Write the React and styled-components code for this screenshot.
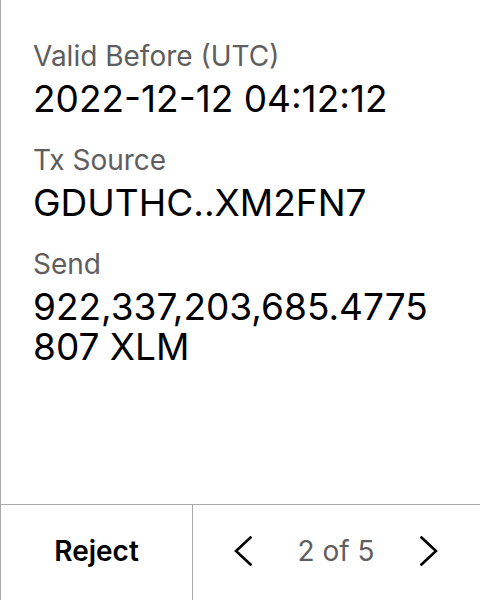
import React from 'react';
import styled, { createGlobalStyle } from 'styled-components';

let Global = createGlobalStyle`
  html, body {
    margin: 0;
    padding: 0;
    background: #fff;
  }
  body {
    font-family: Inter, "Noto Sans", sans-serif;
  }
`;

let Screen = styled.div`
  width: 480px;
  height: 600px;
  box-sizing: border-box;
  border-left: 1px solid #a8a8a8;
  display: flex;
  flex-direction: column;
`;

let Body = styled.div`
  flex: 1;
  padding: 39px 36px 0 32px;
  display: flex;
  flex-direction: column;
  gap: 24px;
`;

let Field = styled.div`
  display: flex;
  flex-direction: column;
  gap: 6px;
`;

let Label = styled.div`
  font-size: 28px;
  line-height: 34px;
  color: #5e5e5e;
`;

let Value = styled.div`
  font-size: 37px;
  line-height: 40px;
  color: #000;
  word-break: break-all;
`;

let Footer = styled.div`
  height: 96px;
  box-sizing: border-box;
  border-top: 1px solid #a8a8a8;
  display: flex;
`;

let RejectBtn = styled.button`
  width: 192px;
  border: none;
  border-right: 1px solid #a8a8a8;
  background: none;
  font-family: inherit;
  font-size: 28px;
  font-weight: 600;
  color: #000;
  padding: 0 0 4px;
`;

let Pager = styled.div`
  flex: 1;
  display: flex;
  align-items: center;
  justify-content: space-between;
  padding: 0 42px 4px 41px;
`;

let Arrow = styled.button`
  border: none;
  background: none;
  padding: 0;
  width: 18px;
  height: 32px;
  display: flex;
  align-items: center;
  justify-content: center;
`;

let Count = styled.span`
  font-size: 28px;
  color: #5e5e5e;
`;

function Chevron({ dir }) {
  let d = dir === 'left' ? 'M16.5 1.5 L2 15 L16.5 28.5' : 'M1.5 1.5 L16 15 L1.5 28.5';
  return (
    <svg width="18" height="30" viewBox="0 0 18 30" fill="none">
      <path d={d} stroke="#000" strokeWidth="2.6" strokeLinecap="square" strokeLinejoin="miter" />
    </svg>
  );
}

let fields = [
  { label: 'Valid Before (UTC)', value: '2022-12-12 04:12:12' },
  { label: 'Tx Source', value: 'GDUTHC..XM2FN7' },
  { label: 'Send', value: '922,337,203,685.4775807 XLM' },
];

export default function App() {
  return (
    <>
      <Global />
      <Screen>
        <Body>
          {fields.map((f) => (
            <Field key={f.label}>
              <Label>{f.label}</Label>
              <Value>{f.value}</Value>
            </Field>
          ))}
        </Body>
        <Footer>
          <RejectBtn>Reject</RejectBtn>
          <Pager>
            <Arrow><Chevron dir="left" /></Arrow>
            <Count>2 of 5</Count>
            <Arrow><Chevron dir="right" /></Arrow>
          </Pager>
        </Footer>
      </Screen>
    </>
  );
}
